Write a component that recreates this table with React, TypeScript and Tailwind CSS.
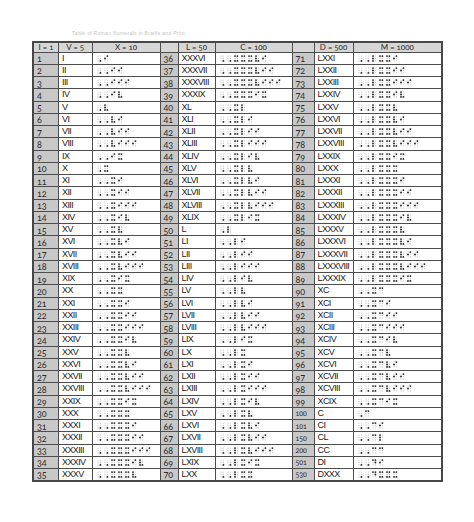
import React from "react";

// braille dots per letter (1-6 numbering)
const LETTERS: Record<string, number[]> = {
  I: [2, 4],
  V: [1, 2, 3, 6],
  X: [1, 3, 4, 6],
  L: [1, 2, 3],
  C: [1, 4],
  D: [1, 4, 5],
  M: [1, 3, 4],
};

const CAP = [6];

function toRoman(n: number) {
  const map: [number, string][] = [
    [1000, "M"], [900, "CM"], [500, "D"], [400, "CD"], [100, "C"], [90, "XC"],
    [50, "L"], [40, "XL"], [10, "X"], [9, "IX"], [5, "V"], [4, "IV"], [1, "I"],
  ];
  let out = "";
  for (const [v, s] of map) {
    while (n >= v) {
      out += s;
      n -= v;
    }
  }
  return out;
}

function brailleCells(roman: string) {
  const prefix = roman.length > 1 ? [CAP, CAP] : [CAP];
  return [...prefix, ...roman.split("").map((c) => LETTERS[c])];
}

const PITCH = 7;
const GAP = 2.4;

function Braille({ roman }: { roman: string }) {
  const cells = brailleCells(roman);
  const w = cells.length * PITCH;
  return (
    <svg width={w} height={7} viewBox={`0 0 ${w} 7`} className="block">
      {cells.map((dots, ci) =>
        [1, 2, 3, 4, 5, 6].map((d) => {
          const col = d > 3 ? 1 : 0;
          const row = (d - 1) % 3;
          const on = dots.includes(d);
          return (
            <circle
              key={`${ci}-${d}`}
              cx={ci * PITCH + 1 + col * GAP}
              cy={1.1 + row * GAP}
              r={on ? 0.95 : 0.65}
              fill={on ? "#262626" : "#c9c9c9"}
            />
          );
        })
      )}
    </svg>
  );
}

const COL_A = Array.from({ length: 35 }, (_, i) => i + 1);
const COL_B = Array.from({ length: 35 }, (_, i) => i + 36);
const COL_C = [...Array.from({ length: 29 }, (_, i) => i + 71), 100, 101, 150, 200, 501, 530];

const HEADERS = ["I = 1", "V = 5", "X = 10", "", "L = 50", "C = 100", "", "D = 500", "M = 1000"];

function NumCell({ n }: { n: number }) {
  return (
    <td
      className={`bg-[#c8c8c8] border border-[#4d4d4d] pl-[3px] pt-[1px] leading-none text-[#2b2b2b] oldstyle-nums font-['Lato','Open_Sans',sans-serif] ${
        n >= 100 ? "text-[7px]" : "text-[9px]"
      }`}
    >
      {n}
    </td>
  );
}

function Group({ n }: { n: number }) {
  const roman = toRoman(n);
  return (
    <>
      <NumCell n={n} />
      <td className="border border-[#4d4d4d] pl-[3px] leading-none text-[9px] tracking-[-0.6px] text-[#222]">
        {roman}
      </td>
      <td className="border border-[#4d4d4d] pl-[4px]">
        <Braille roman={roman} />
      </td>
    </>
  );
}

export default function App() {
  return (
    <div className="w-[474px] h-[522px] bg-white font-['Liberation_Sans',Arial,sans-serif]">
      <div className="h-[41px] flex items-end pl-[72px] pb-[5px]">
        <span className="text-[5px] leading-none text-[#c4c4c4] tracking-[0.3px]">
          Table of Roman Numerals in Braille and Print
        </span>
      </div>
      <div className="pl-[32px]">
        <table className="border-collapse table-fixed border-2 border-[#474747] w-[409px]">
          <colgroup>
            <col className="w-[25.5px]" />
            <col className="w-[33.5px]" />
            <col className="w-[68px]" />
            <col className="w-[18px]" />
            <col className="w-[37px]" />
            <col className="w-[77px]" />
            <col className="w-[22px]" />
            <col className="w-[39px]" />
            <col className="w-[89px]" />
          </colgroup>
          <thead>
            <tr className="h-[10px]">
              {HEADERS.map((h, i) => (
                <th
                  key={i}
                  className="bg-[#d6d6d6] border border-[#4d4d4d] p-0 text-center font-normal leading-none text-[8px] text-[#2b2b2b] oldstyle-nums font-['Lato','Open_Sans',sans-serif]"
                >
                  {h}
                </th>
              ))}
            </tr>
          </thead>
          <tbody>
            {COL_A.map((a, i) => (
              <tr key={a} className="h-[12.25px]">
                <Group n={a} />
                <Group n={COL_B[i]} />
                <Group n={COL_C[i]} />
              </tr>
            ))}
          </tbody>
        </table>
      </div>
    </div>
  );
}
